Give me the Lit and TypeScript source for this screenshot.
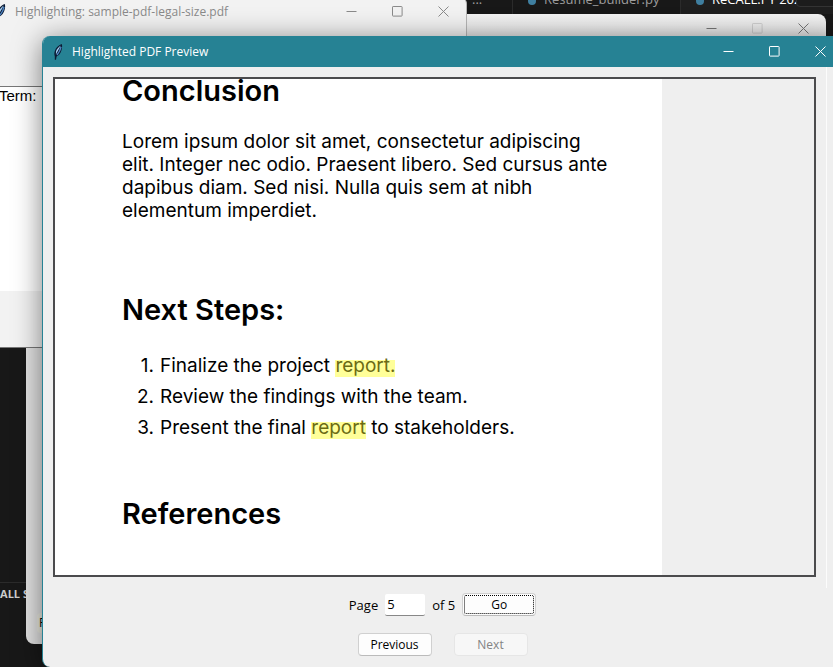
import { LitElement, html, css } from "lit";
import { customElement, property } from "lit/decorators.js";

@customElement("feather-icon")
class FeatherIcon extends LitElement {
  static styles = css`
    :host { display: block; width: 12px; height: 18px; flex: none; }
    svg { display: block; width: 100%; height: 100%; }
  `;
  render() {
    return html`<svg viewBox="0 0 12 18" aria-hidden="true">
      <path d="M9.8 1C7 1.8 4 4.6 3 7.4C2.2 9.4 2.2 11.6 2.8 13.2L2.8 16.8L4 16.8L4.6 13.6C6.8 12.4 8.6 10 9.4 7.4C10.2 5 10.4 3 9.8 1Z" fill="#0b1a33"/>
      <path d="M8.8 2.4C6.6 3.8 4.6 6.2 4 8.4L3.9 11.4C5.2 8.8 7.2 5.4 8.8 2.4Z" fill="#a4cdf0"/>
      <path d="M9 3.8C8.4 6.8 7 9.6 5 12" stroke="#4f86c4" stroke-width="1.4" fill="none"/>
    </svg>`;
  }
}

@customElement("caption-buttons")
class CaptionButtons extends LitElement {
  @property({ type: Boolean }) fixedSize = false;
  static styles = css`
    :host { display: flex; flex: none; }
    button {
      width: 46px; height: 30px; padding: 0; border: 0; background: none;
      color: inherit; display: grid; place-items: center;
    }
    button:disabled { opacity: 0.25; }
    svg { display: block; width: 11px; height: 11px; fill: none; stroke: currentColor; stroke-width: 1; }
  `;
  render() {
    return html`
      <button aria-label="Minimize"><svg viewBox="0 0 11 11"><path d="M0.5 5.5H10.5"/></svg></button>
      <button aria-label="Maximize" ?disabled=${this.fixedSize}>
        <svg viewBox="0 0 11 11"><rect x="0.5" y="0.5" width="9.6" height="9.6" rx="0.6"/></svg>
      </button>
      <button aria-label="Close"><svg viewBox="0 0 11 11"><path d="M0.5 0.5L10.5 10.5M10.5 0.5L0.5 10.5"/></svg></button>
    `;
  }
}

@customElement("app-root")
class AppRoot extends LitElement {
  static styles = css`
    :host {
      display: block; position: relative; height: 100vh; overflow: hidden;
      background: #181818; color: #000;
      font: 12px/16px "Open Sans", "Noto Sans", sans-serif;
    }
    * { box-sizing: border-box; }

    .tabs {
      position: absolute; top: -16px; left: 466px; right: 0; height: 30px;
      display: flex; color: #9d9d9d; font-size: 13px; line-height: 24px;
    }
    .tab {
      display: flex; align-items: center; gap: 8px; padding: 0 15px;
      border-right: 1px solid #2b2b2b; white-space: nowrap; width: 168px; flex: none;
    }
    .tab.more { width: 47px; padding: 0 6px; }
    .tab.current { color: #fff; background: #1f1f1f; border: 0; }
    .dot { width: 8px; height: 8px; border-radius: 50%; background: #3f7fa0; margin-top: 4px; }
    .popup {
      position: absolute; top: -4px; left: 796px; right: -4px; height: 11px;
      background: #1c1c1c; border: 1px solid #333; border-radius: 0 0 0 4px;
    }
    .sidebar {
      position: absolute; left: 0; top: 582px; width: 29px; height: 24px;
      border-top: 1px solid #2b2b2b; color: #ccc; font-size: 11px; font-weight: 700;
      line-height: 22px; white-space: nowrap; display: flex; justify-content: flex-end;
    }

    .window { position: absolute; background: #efefef; overflow: hidden; display: flex; flex-direction: column; }
    .bar { display: flex; align-items: center; flex: none; }
    .bar .name { flex: 1; white-space: nowrap; }
    .behind {
      left: 26px; right: 7px; top: 14px; bottom: 23px; border-radius: 8px;
      color: #767676; background: linear-gradient(#f3f3f3, #e2e2e2 24px);
    }
    .behind .bar { justify-content: flex-end; height: 28px; }
    .search {
      left: -10px; width: 477px; top: -4px; height: 352px; border-radius: 0 8px 0 0;
      border-right: 1px solid #b5b5b5; border-bottom: 1px solid #777;
      color: #8a8a8a; background: #f2f2f2;
    }
    .search .bar { height: 31px; padding-left: 5px; gap: 8px; }
    .term {
      margin-top: 59px; height: 205px; padding: 0 9px; background: #fff; color: #000;
      border-top: 1px solid #777; font: 15px/18px "Liberation Sans", Arial, sans-serif;
      display: flex; align-items: flex-start;
    }
    .bottom-hint {
      position: absolute; left: 37px; top: 613px; width: 20px; height: 20px; padding-left: 2px;
      background: #e9e9df; border-radius: 4px; line-height: 20px;
    }

    .preview {
      left: 42px; right: -10px; top: 36px; bottom: 0; border-left: 1px solid #268294;
      border-radius: 8px 0 0 8px; box-shadow: 0 4px 28px rgba(0, 0, 0, 0.5);
    }
    .preview .bar { height: 31px; padding-left: 9px; gap: 8px; background: #268294; color: #fff; }
    .body {
      flex: 1; min-height: 0; display: flex; flex-direction: column; padding: 10px 27px 11px 10px;
      background: linear-gradient(#fcfcfc, #fcfcfc) right 16px top 0 / 1px 521px no-repeat;
    }
    .canvas {
      flex: 1; min-height: 0; overflow: hidden; display: flex;
      border: 2px solid #4b4b4d;
    }
    .page {
      width: 80%; padding: 0 60px 0 67px; background: #fff; overflow: hidden;
      font: 19px/23px Inter, sans-serif;
    }
    h2 { margin: 0; font-size: 29px; line-height: 24px; font-weight: 600; }
    .page p { margin: 27px 0 76px; }
    .line { display: block; white-space: nowrap; }
    ol { list-style: none; margin: 28px 0 59px; padding: 0; line-height: 31px; }
    li { display: grid; grid-template-columns: 32px 1fr; column-gap: 6px; white-space: nowrap; }
    .num { text-align: right; }
    mark { color: #6b6b14; background: linear-gradient(#ffff99, #ffff99) 0 6px / 100% 17px no-repeat; }

    .controls { display: flex; flex-direction: column; align-items: center; gap: 17px; padding: 16px 0 0; margin-right: -16px; }
    .row { display: flex; align-items: center; height: 23px; }
    .jump { font-size: 13px; gap: 7px; }
    .jump input {
      width: 40px; height: 22px; padding: 0 2px; border: 0; border-bottom: 1px solid #888;
      background: #fff; font: inherit; border-radius: 2px;
    }
    .act {
      width: 74px; height: 23px; padding: 0; border: 1px solid #d0d0d0; border-bottom-color: #bbb;
      border-radius: 4px; background: #fdfdfd; color: #000; font: inherit; font-size: 12px;
    }
    .act.focus { outline: 1px dotted #000; outline-offset: -3px; }
    .act:disabled { color: #838383; background: #f7f7f7; border-color: #e6e6e6; }
    .nav { gap: 22px; }
  `;

  private steps = [
    html`Finalize the project <mark>report.</mark>`,
    html`Review the findings with the team.`,
    html`Present the final <mark>report</mark> to stakeholders.`,
  ];
  private lines = [
    "Lorem ipsum dolor sit amet, consectetur adipiscing",
    "elit. Integer nec odio. Praesent libero. Sed cursus ante",
    "dapibus diam. Sed nisi. Nulla quis sem at nibh",
    "elementum imperdiet.",
  ];

  render() {
    return html`
      <div class="tabs">
        <div class="tab more">...</div>
        <div class="tab"><span class="dot"></span>Resume_builder.py</div>
        <div class="tab current"><span class="dot"></span>ReCALL.PY 2025.</div>
      </div>
      <div class="popup"></div>
      <div class="sidebar">CALL S</div>

      <section class="window behind">
        <div class="bar"><caption-buttons .fixedSize=${true}></caption-buttons></div>
      </section>
      <div class="bottom-hint">F</div>

      <section class="window search">
        <div class="bar">
          <feather-icon></feather-icon>
          <span class="name">Highlighting: sample-pdf-legal-size.pdf</span>
          <caption-buttons></caption-buttons>
        </div>
        <div class="term">Term:</div>
      </section>

      <main class="window preview">
        <div class="bar">
          <feather-icon></feather-icon>
          <span class="name">Highlighted PDF Preview</span>
          <caption-buttons></caption-buttons>
        </div>
        <div class="body">
          <div class="canvas">
            <article class="page">
              <h2>Conclusion</h2>
              <p>${this.lines.map((l) => html`<span class="line">${l}</span>`)}</p>
              <h2>Next Steps:</h2>
              <ol>${this.steps.map((s, i) => html`<li><span class="num">${i + 1}.</span><span>${s}</span></li>`)}</ol>
              <h2>References</h2>
            </article>
          </div>
          <div class="controls">
            <div class="row jump">
              <label for="page">Page</label>
              <input id="page" type="text" .value=${"5"} />
              <span>of 5</span>
              <button class="act focus">Go</button>
            </div>
            <div class="row nav">
              <button class="act">Previous</button>
              <button class="act" disabled>Next</button>
            </div>
          </div>
        </div>
      </main>
    `;
  }
}
